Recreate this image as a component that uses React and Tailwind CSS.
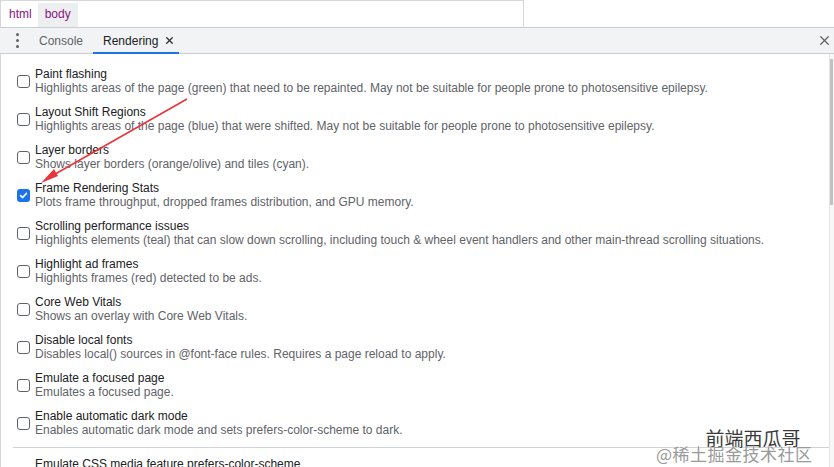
import { X } from 'lucide-react'

const items = [
  ['Paint flashing', 'Highlights areas of the page (green) that need to be repainted. May not be suitable for people prone to photosensitive epilepsy.'],
  ['Layout Shift Regions', 'Highlights areas of the page (blue) that were shifted. May not be suitable for people prone to photosensitive epilepsy.'],
  ['Layer borders', 'Shows layer borders (orange/olive) and tiles (cyan).'],
  ['Frame Rendering Stats', 'Plots frame throughput, dropped frames distribution, and GPU memory.', true],
  ['Scrolling performance issues', 'Highlights elements (teal) that can slow down scrolling, including touch & wheel event handlers and other main-thread scrolling situations.'],
  ['Highlight ad frames', 'Highlights frames (red) detected to be ads.'],
  ['Core Web Vitals', 'Shows an overlay with Core Web Vitals.'],
  ['Disable local fonts', 'Disables local() sources in @font-face rules. Requires a page reload to apply.'],
  ['Emulate a focused page', 'Emulates a focused page.'],
  ['Enable automatic dark mode', 'Enables automatic dark mode and sets prefers-color-scheme to dark.'],
]

function Checkbox({ checked }) {
  if (checked) {
    return (
      <span className="flex h-[13px] w-[13px] shrink-0 items-center justify-center rounded-[3px] bg-[#1a73e8]">
        <svg width="9" height="9" viewBox="0 0 10 10" fill="none">
          <path d="M1.8 5.2 4 7.3 8.3 2.6" stroke="white" strokeWidth="1.8" strokeLinecap="round" strokeLinejoin="round" />
        </svg>
      </span>
    )
  }
  return <span className="h-[13px] w-[13px] shrink-0 rounded-[3px] border border-[#5f6368] bg-white" />
}

export default function App() {
  return (
    <div className="relative h-[467px] w-[834px] overflow-hidden bg-white font-['Liberation_Sans',Arial,sans-serif] text-[12px]">
      {/* breadcrumb strip */}
      <div className="flex h-[27px]">
        <div className="flex w-[524px] border-t border-r border-l border-[#d5d7da] pl-[7px]">
          <span className="mt-[2px] px-[1px] leading-[22px] text-[#881280]">html</span>
          <span className="mt-[2px] ml-[5px] bg-[#eceef0] px-[7px] leading-[22px] text-[#881280]">body</span>
        </div>
      </div>

      {/* tab bar */}
      <div className="flex h-[27px] items-stretch border-y border-[#cacdd1] bg-[#f1f3f4] text-[#333]">
        <div className="flex w-[34px] flex-col items-center justify-center gap-[3px] pl-[1px]">
          <span className="h-[3px] w-[3px] rounded-full bg-[#5f6368]" />
          <span className="h-[3px] w-[3px] rounded-full bg-[#5f6368]" />
          <span className="h-[3px] w-[3px] rounded-full bg-[#5f6368]" />
        </div>
        <div className="flex items-center px-[5px] text-[#5f6368]">Console</div>
        <div className="relative ml-[5px] flex items-center gap-[6px] pr-[4px] pl-[10px] text-[#202124]">
          Rendering
          <X size={11} strokeWidth={3} className="text-[#333]" />
          <span className="absolute right-0 bottom-[-1px] left-0 h-[2px] bg-[#1a73e8]" />
        </div>
        <div className="flex-1" />
        <div className="flex items-center pr-[2px]">
          <X size={15} strokeWidth={2} className="text-[#5f6368]" />
        </div>
      </div>

      {/* panel */}
      <div className="flex h-[413px] border-l border-[#d5d7da]">
        <div className="flex-1 pt-[13px]">
          <div className="flex flex-col gap-[10px]">
            {items.map(([title, desc, checked]) => (
              <div key={title} className="flex items-center gap-[5px] pl-[16px]">
                <Checkbox checked={checked} />
                <div className="leading-[14px]">
                  <div className="text-[#202124]">{title}</div>
                  <div className="whitespace-nowrap text-[#5f6368]">{desc}</div>
                </div>
              </div>
            ))}
          </div>
          <div className="mt-[10px] ml-[12px] border-t border-[#d0d3d6] pt-[9px] pl-[22px] leading-[14px] text-[#202124]">
            Emulate CSS media feature prefers-color-scheme
          </div>
        </div>
        <div className="flex w-[5px] flex-col border-l border-[#e4e4e4] bg-[#f7f7f7]">
          <div className="mt-[5px] h-[146px] w-[3px] bg-[#c1c1c1]" />
        </div>
      </div>

      {/* annotation arrow */}
      <svg className="pointer-events-none absolute top-0 left-0" width="834" height="467">
        <line x1="187" y1="99" x2="50" y2="177" stroke="#e8363b" strokeWidth="1.6" />
        <path d="M41 183 L54 169 L58 176 Z" fill="#e8363b" />
      </svg>

      {/* watermark */}
      <div className="pointer-events-none absolute top-[428px] left-[656px] flex flex-col items-end font-['Noto_Sans_CJK_SC',sans-serif]">
        <span className="mr-[12px] text-[19px] leading-[19px] text-[#3a3a3a] [text-shadow:0_0_2px_#fff]">前端西瓜哥</span>
        <span className="-mt-[2px] text-[17px] leading-[17px] tracking-[0.5px] text-[#9a9a9a] [text-shadow:0_0_2px_#fff]">@稀土掘金技术社区</span>
      </div>
    </div>
  )
}
